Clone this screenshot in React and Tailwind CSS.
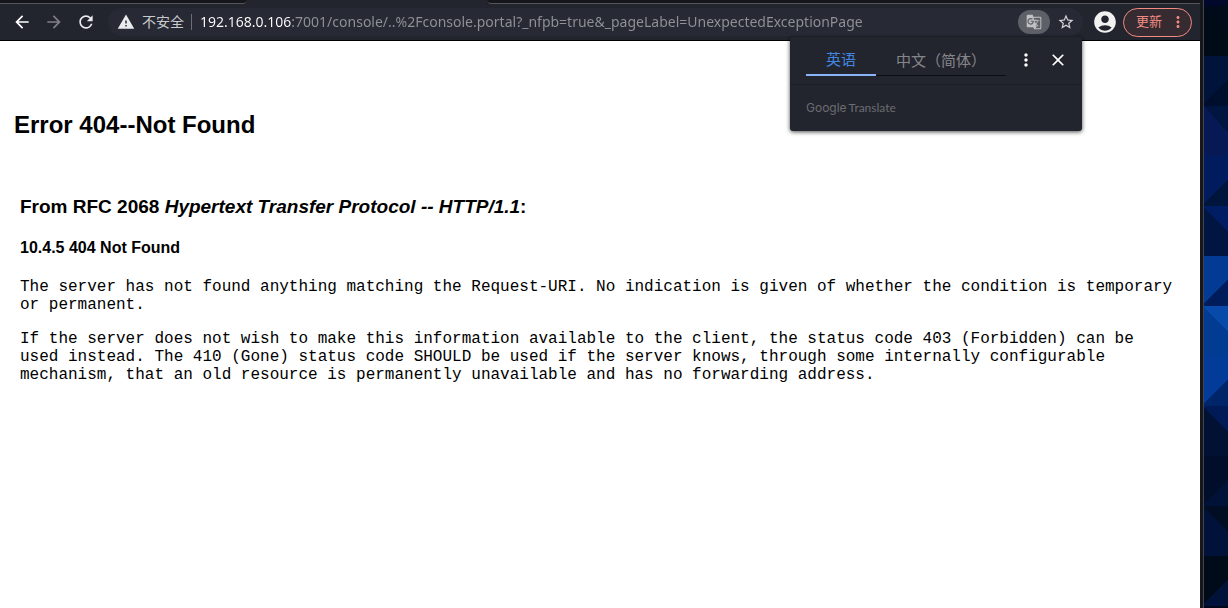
import React from "react";
import {
  MdAccountCircle,
  MdArrowBack,
  MdArrowForward,
  MdClose,
  MdGTranslate,
  MdMoreVert,
  MdRefresh,
  MdStarBorder,
  MdWarning,
} from "react-icons/md";

const PAGE_URL =
  "192.168.0.106:7001/console/..%2Fconsole.portal?_nfpb=true&_pageLabel=UnexpectedExceptionPage";

function TabStrip() {
  return (
    <div className="flex h-1 bg-[#15161b]">
      <div className="w-[247px] rounded-br-[6px] border-b border-[#55565a]" />
      <div className="w-[240px] bg-[#22242e]" />
      <div className="flex-1 rounded-bl-[6px] border-b border-[#55565a]" />
    </div>
  );
}

function Toolbar() {
  return (
    <div className="flex h-[37px] items-center border-b border-black bg-[#22242e] pr-2 pl-3 text-[#e8eaed]">
      <button type="button" aria-label="Back" className="text-white">
        <MdArrowBack size={20} />
      </button>
      <button type="button" aria-label="Forward" className="ml-3 text-[#7f8086]">
        <MdArrowForward size={20} />
      </button>
      <button type="button" aria-label="Reload" className="ml-3">
        <MdRefresh size={20} />
      </button>
      <div className="ml-3 flex h-7 min-w-0 flex-1 items-center rounded-full bg-[#272a35] pr-2 pl-[9px]">
        <button
          type="button"
          className="flex shrink-0 items-center gap-[7px] text-sm text-[#c9cacd]"
        >
          <MdWarning size={18} className="text-[#e8eaed]" />
          不安全
        </button>
        <div className="mr-2 ml-[7px] h-4 w-px shrink-0 bg-[#6c6e76]" />
        <input
          type="text"
          aria-label="Address"
          defaultValue={PAGE_URL}
          className="min-w-0 flex-1 bg-[linear-gradient(90deg,#ffffff_91px,#919297_91px)] bg-clip-text text-sm text-transparent outline-none"
        />
        <button
          type="button"
          aria-label="Translate this page"
          className="flex h-6 w-8 items-center justify-center rounded-full bg-[#5d6067] text-[#bfc1c4]"
        >
          <MdGTranslate size={16} />
        </button>
        <button type="button" aria-label="Bookmark this page" className="ml-[7px] text-[#d5d6d9]">
          <MdStarBorder size={18} />
        </button>
      </div>
      <button type="button" aria-label="Profile" className="ml-[9px] text-[#f1f1f1]">
        <MdAccountCircle size={26} />
      </button>
      <button
        type="button"
        className="ml-[5px] flex h-[29px] items-center gap-[7px] rounded-full border border-[#f28b82] bg-[#352b31] pr-1 pl-3 text-[13px] text-[#f28b82]"
      >
        更新
        <MdMoreVert size={18} />
      </button>
    </div>
  );
}

function TranslatePopup() {
  return (
    <section
      aria-label="Translate"
      className="absolute top-[37px] right-[118px] w-[292px] rounded-[3px] bg-[#23252e] shadow-[0_1px_4px_rgba(0,0,0,0.7)]"
    >
      <div className="flex items-center border-b border-[#1d1f26] pt-[7px] pr-[14px] pb-2 pl-4">
        <div role="tablist" className="flex text-[15px] leading-[30px]">
          <button
            type="button"
            role="tab"
            aria-selected="true"
            className="h-8 border-b-2 border-[#8ab4f8] px-5 text-[#4285e0]"
          >
            英语
          </button>
          <button
            type="button"
            role="tab"
            aria-selected="false"
            className="h-8 border-b border-[#0c0d11] px-5 text-[#85868b]"
          >
            中文（简体）
          </button>
        </div>
        <button type="button" aria-label="Options" className="ml-auto text-white">
          <MdMoreVert size={20} />
        </button>
        <button type="button" aria-label="Close" className="ml-3 text-white">
          <MdClose size={20} />
        </button>
      </div>
      <div className="flex h-[46px] items-center gap-[2px] pl-4 text-xs text-[#6b6c71]">
        <span className="font-['Inter',sans-serif]">Google</span>
        <span className="font-['Lato',sans-serif]">Translate</span>
      </div>
    </section>
  );
}

function ErrorPage() {
  return (
    <main className="flex-1 bg-white pt-[69px] pr-5 pb-8 pl-[14px] font-['Liberation_Sans',Arial,sans-serif] text-black">
      <h1 className="text-2xl leading-[30px] font-bold">Error 404--Not Found</h1>
      <div className="mt-14 pl-[6px]">
        <h2 className="text-[19px] leading-[22px] font-bold">
          From RFC 2068 <i>Hypertext Transfer Protocol -- HTTP/1.1</i>:
        </h2>
        <h3 className="mt-[21px] text-base leading-[18px] font-bold">10.4.5 404 Not Found</h3>
        <div className="mt-[21px] space-y-4 font-['Liberation_Mono','Courier_New',monospace] text-base leading-[18px]">
          <p>
            The server has not found anything matching the Request-URI. No indication is given of
            whether the condition is temporary or permanent.
          </p>
          <p>
            If the server does not wish to make this information available to the client, the status
            code 403 (Forbidden) can be used instead. The 410 (Gone) status code SHOULD be used if
            the server knows, through some internally configurable mechanism, that an old resource
            is permanently unavailable and has no forwarding address.
          </p>
        </div>
      </div>
    </main>
  );
}

const FACETS = [
  ["0,0 24,0 24,6 0,6", "#00082c"],
  ["0,6 24,6 24,56 0,56", "#000b18"],
  ["0,6 24,6 24,32", "#000a1a"],
  ["0,56 24,56 24,106 0,106", "#00133a"],
  ["0,104 24,79 24,106 0,106", "#000e2e"],
  ["0,106 24,106 24,156 0,156", "#071955"],
  ["0,106 24,106 24,133", "#001540"],
  ["0,156 24,156 24,206 0,206", "#001c5e"],
  ["0,204 24,179 24,206 0,206", "#00153c"],
  ["0,206 24,206 24,256 0,256", "#001542"],
  ["0,208 0,206 24,206 24,232", "#001c62"],
  ["0,256 24,256 24,306 0,306", "#033a94"],
  ["0,304 24,279 24,306 0,306", "#001c5a"],
  ["0,306 24,306 24,356 0,356", "#023b92"],
  ["0,308 0,306 24,306 24,332", "#074aaa"],
  ["0,356 24,356 24,406 0,406", "#033c98"],
  ["0,404 24,379 24,406 0,406", "#002468"],
  ["0,406 24,406 24,456 0,456", "#001134"],
  ["0,408 0,406 24,406 24,432", "#001a58"],
  ["0,456 24,456 24,506 0,506", "#000e2c"],
  ["0,504 24,481 24,506 0,506", "#001238"],
  ["0,506 24,506 24,556 0,556", "#00123a"],
  ["0,508 0,506 24,506 24,532", "#000d22"],
  ["0,556 24,556 24,606 0,606", "#000b1a"],
  ["0,604 24,579 24,606 0,606", "#00123a"],
  ["0,606 24,606 24,608 0,608", "#00071a"],
];

function Wallpaper() {
  return (
    <div className="w-6 shrink-0 bg-[#00071a]">
      <svg viewBox="0 0 24 608" className="block w-full" aria-hidden="true" shapeRendering="crispEdges">
        {FACETS.map(([points, fill]) => (
          <polygon key={points} points={points} fill={fill} />
        ))}
      </svg>
    </div>
  );
}

export default function App() {
  return (
    <div className="flex min-h-screen bg-[#15171c] font-['Noto_Sans','Noto_Sans_CJK_SC',sans-serif]">
      <div className="relative flex min-w-0 flex-1 flex-col">
        <TabStrip />
        <Toolbar />
        <ErrorPage />
        <TranslatePopup />
      </div>
      <div className="w-1 shrink-0 border-r border-[#45464a] bg-[#15171c]" />
      <Wallpaper />
    </div>
  );
}
